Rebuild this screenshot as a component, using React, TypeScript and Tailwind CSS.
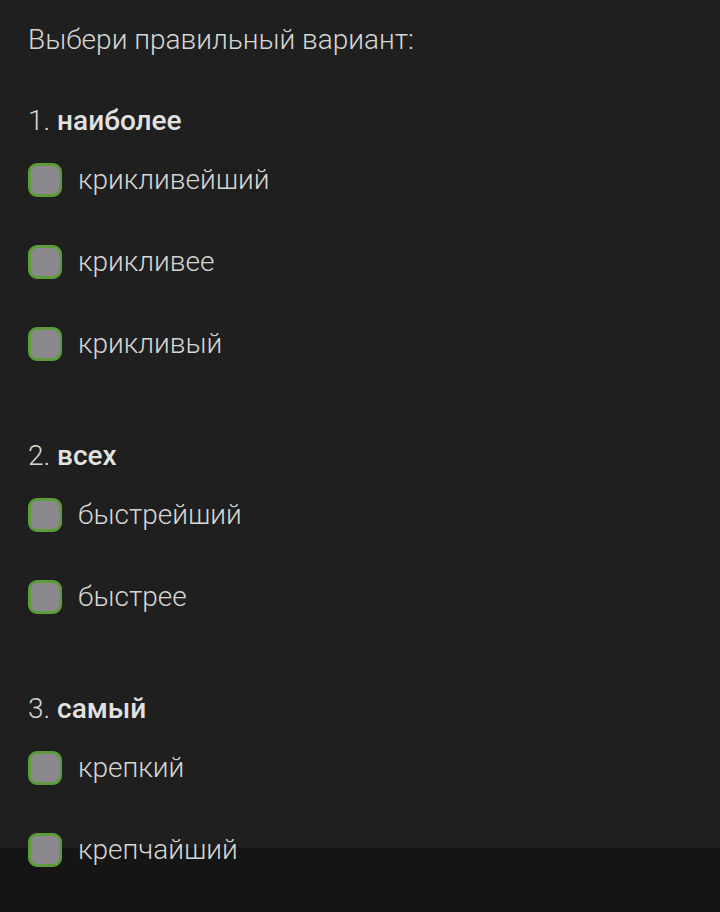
const questions = [
    { num: '1.', word: 'наиболее', options: ['крикливейший', 'крикливее', 'крикливый'] },
    { num: '2.', word: 'всех', options: ['быстрейший', 'быстрее'] },
    { num: '3.', word: 'самый', options: ['крепкий', 'крепчайший'] },
];

function Option({ label }: { label: string }) {
    return (
        <div className="flex h-[82px] items-center gap-4">
            <span className="block h-[34px] w-[34px] shrink-0 rounded-[9px] border-[3px] border-[#5c9c3a] bg-[#8b898d]" />
            <span className="text-[28px] font-light leading-none text-[#d6d6d4]">{label}</span>
        </div>
    );
}

export default function App() {
    return (
        <div
            className="min-h-[912px] w-[720px] bg-[linear-gradient(to_bottom,#1f1f1f_848px,#151515_848px)] px-[28px] pt-[22px]"
            style={{ fontFamily: 'Roboto, "Noto Sans", sans-serif' }}
        >
            <h1 className="text-[28px] font-light leading-[36px] text-[#d6d6d4]">Выбери правильный вариант:</h1>
            <div className="mt-[45px] flex flex-col gap-[53px]">
                {questions.map((q) => (
                    <div key={q.num}>
                        <div className="text-[28px] leading-[36px] text-[#d6d6d4]">
                            <span className="font-light">{q.num} </span>
                            <span className="font-medium text-[#e2e2e0]">{q.word}</span>
                        </div>
                        <div className="flex flex-col">
                            {q.options.map((o) => (
                                <Option key={o} label={o} />
                            ))}
                        </div>
                    </div>
                ))}
            </div>
        </div>
    );
}
